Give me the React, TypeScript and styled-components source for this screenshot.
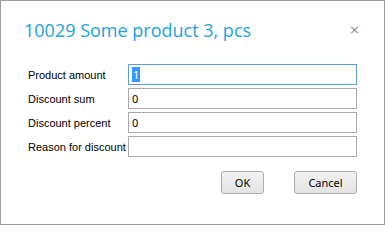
import styled, { createGlobalStyle } from 'styled-components'

const Global = createGlobalStyle`
  html, body {
    margin: 0;
    padding: 0;
    background: #ffffff;
  }
  * {
    box-sizing: border-box;
  }
`

const Dialog = styled.div`
  width: 385px;
  height: 225px;
  border: 1px solid #9c9c9c;
  background: #ffffff;
  display: flex;
  flex-direction: column;
  font-family: "Open Sans", "Noto Sans", sans-serif;
`

const Header = styled.div`
  display: flex;
  align-items: center;
  justify-content: space-between;
  padding: 3px 24px 0 23px;
  height: 54px;
`

const Title = styled.h1`
  margin: 0;
  font-size: 18px;
  font-weight: 400;
  color: #1ba1e2;
  line-height: 24px;
`

const Close = styled.button`
  border: none;
  background: none;
  padding: 0;
  color: #8a8a8a;
  font-size: 13px;
  line-height: 14px;
  cursor: pointer;
  font-family: "DejaVu Sans", sans-serif;
`

const Form = styled.div`
  display: flex;
  flex-direction: column;
  gap: 3px;
  padding: 9px 27px 0 27px;
`

const Row = styled.div`
  display: flex;
  align-items: center;
  height: 21px;
`

const Label = styled.label`
  width: 100px;
  flex-shrink: 0;
  font-family: "Liberation Sans", Arial, sans-serif;
  font-size: 11px;
  color: #000000;
  white-space: nowrap;
`

const Input = styled.input`
  flex: 1;
  min-width: 0;
  height: 21px;
  border: 1px solid #ababab;
  padding: 0 3px;
  font-family: "Noto Sans", "Open Sans", sans-serif;
  font-size: 11px;
  color: #000000;
  outline: none;
  background: #ffffff;
`

const FocusedBox = styled.div`
  flex: 1;
  height: 21px;
  border: 1px solid #5b9ee0;
  padding: 0 3px;
  font-family: "Noto Sans", "Open Sans", sans-serif;
  font-size: 11px;
  display: flex;
  align-items: center;
`

const Selected = styled.span`
  background: #3399ff;
  color: #ffffff;
  padding: 0 1px;
`

const Footer = styled.div`
  display: flex;
  justify-content: flex-end;
  gap: 30px;
  padding: 14px 27px 0 0;
`

const Button = styled.button<{ $w: number }>`
  width: ${p => p.$w}px;
  height: 23px;
  border: 1px solid #adadad;
  border-radius: 3px;
  background: linear-gradient(#f2f2f2, #e3e3e3);
  font-family: "Noto Sans", "Open Sans", sans-serif;
  font-size: 11px;
  color: #000000;
  padding: 0;
`

export default function App() {
  return (
    <>
      <Global />
      <Dialog>
        <Header>
          <Title>10029 Some product 3, pcs</Title>
          <Close aria-label="close">×</Close>
        </Header>
        <Form>
          <Row>
            <Label>Product amount</Label>
            <FocusedBox>
              <Selected>1</Selected>
            </FocusedBox>
          </Row>
          <Row>
            <Label>Discount sum</Label>
            <Input defaultValue="0" />
          </Row>
          <Row>
            <Label>Discount percent</Label>
            <Input defaultValue="0" />
          </Row>
          <Row>
            <Label>Reason for discount</Label>
            <Input defaultValue="" />
          </Row>
        </Form>
        <Footer>
          <Button $w={43}>OK</Button>
          <Button $w={63}>Cancel</Button>
        </Footer>
      </Dialog>
    </>
  )
}
